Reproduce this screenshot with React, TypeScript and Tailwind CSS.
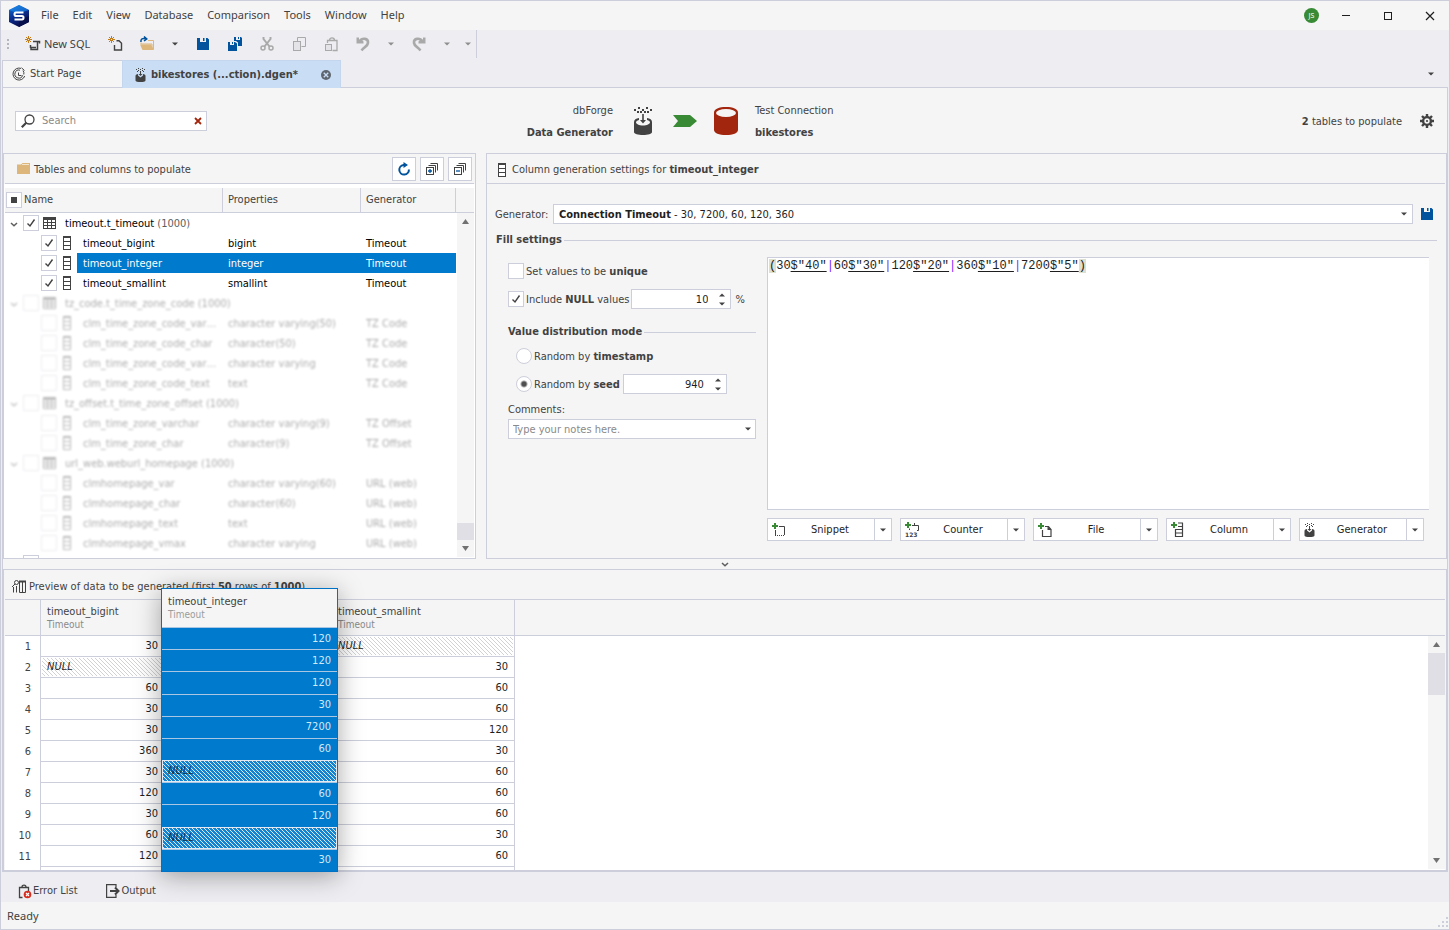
import { useId, useState, type ReactNode } from "react";

type IconProps = { className?: string };

const DARK = "#424242";
const BLUE = "#00539c";
const AMBER = "#c27d1a";
const GREEN = "#388a34";
const GRAY = "#a9a9a9";

/* ---------- icons ---------- */

const Logo = () => (
  <svg viewBox="0 0 20 22" className="h-[22px] w-5" aria-hidden="true">
    <defs>
      <linearGradient id="logo-base" x1="0" y1="0" x2="0.5" y2="1">
        <stop offset="0" stopColor="#1477d8" />
        <stop offset="0.5" stopColor="#0b3399" />
        <stop offset="1" stopColor="#0a0c45" />
      </linearGradient>
    </defs>
    <path d="M10 0 L20 5 V17 L10 22 L0 17 V5Z" fill="url(#logo-base)" />
    <path d="M10 0 L20 5 L14 7 H5 L0 5Z" fill="#1c8ff0" opacity="0.6" />
    <path d="M14 14 L20 11 V17 L10 22 V17Z" fill="#07104a" />
    <path d="M14.500 7.500 H7 Q5.500 7.500 5.500 9.200 Q5.500 11 7 11 H13 Q14.500 11 14.500 12.800 Q14.500 14.500 13 14.500 H5.500" fill="none" stroke="#fff" strokeWidth="2" />
  </svg>
);

const Star = () => (
  <g stroke={AMBER} strokeWidth="1">
    <path d="M3.500 0V7M0 3.500H7M1 1L6 6M6 1L1 6" fill="none" />
    <rect x="2.500" y="2.500" width="2" height="2" fill="#ededf2" />
  </g>
);

const NewSqlIcon = () => (
  <svg viewBox="0 0 16 16" className="size-4" aria-hidden="true">
    <Star />
    <path d="M8 5.500H14.500V7.500M12.500 5.500V13.500H6V11.500H11M5.500 9V12" fill="none" stroke={DARK} strokeWidth="1.500" />
  </svg>
);

const NewDocIcon = () => (
  <svg viewBox="0 0 16 16" className="size-4" aria-hidden="true">
    <g transform="translate(1 0)">
      <Star />
    </g>
    <path d="M9.500 4.800H12L14.500 7.300V14H7.500V9" fill="none" stroke={DARK} strokeWidth="1.400" />
  </svg>
);

const OpenIcon = () => (
  <svg viewBox="0 0 16 16" className="size-4" aria-hidden="true">
    <path d="M9 4.500H14.500V13H13V8H2V6.500" fill="none" stroke="#dcb67a" strokeWidth="1" />
    <path d="M1 8.500H12L15 14H3.500Z" fill="#dcb67a" />
    <path d="M2 6C1.500 3 3.500 2 7 2.800M5 0.500L7.800 2.900L5 5" fill="none" stroke={BLUE} strokeWidth="1.500" />
  </svg>
);

const SaveIcon = ({ className = "size-3" }: IconProps) => (
  <svg viewBox="0 0 12 12" className={className} aria-hidden="true">
    <path d="M0 0H3V4H9V0H10.500L12 1.500V12H0Z" fill={BLUE} />
    <path d="M6 0H7.500V3H6Z" fill={BLUE} />
  </svg>
);

const SaveAllIcon = () => (
  <svg viewBox="0 0 16 16" className="size-4" aria-hidden="true">
    <path d="M1 6H3V9H7V6H8L10 7.500V15H1Z M5 6H6V8H5Z" fill={BLUE} />
    <path d="M7 1H9V4H13V1H14L15 2V10H11V6.500L9 5H7Z M11 1H12V3H11Z" fill={BLUE} />
  </svg>
);

const CutIcon = () => (
  <svg viewBox="0 0 16 16" className="size-4" aria-hidden="true">
    <path d="M4.500 1V3L10.500 10.500M11.500 1V3L5.500 10.500" fill="none" stroke={GRAY} strokeWidth="2" />
    <circle cx="4" cy="12" r="2" fill="none" stroke={GRAY} strokeWidth="1.500" />
    <circle cx="12" cy="12" r="2" fill="none" stroke={GRAY} strokeWidth="1.500" />
  </svg>
);

const CopyIcon = () => (
  <svg viewBox="0 0 16 16" className="size-4" aria-hidden="true">
    <path d="M6.500 5V1.500H14.500V10.500H10.500" fill="none" stroke={GRAY} />
    <rect x="2.500" y="5.500" width="7" height="9" fill="#e4e4e8" stroke={GRAY} />
  </svg>
);

const PasteIcon = () => (
  <svg viewBox="0 0 16 16" className="size-4" aria-hidden="true">
    <path d="M4.500 7V4.500H14V14.500H9.500M6.500 4.500C6.500 1 11.500 1 11.500 4.500" fill="none" stroke={GRAY} strokeWidth="1.300" />
    <rect x="2.500" y="8.500" width="6" height="6" fill="#e4e4e8" stroke={GRAY} />
  </svg>
);

const UndoIcon = ({ className = "" }: IconProps) => (
  <svg viewBox="0 0 16 16" className={"size-4 " + className} aria-hidden="true">
    <path d="M1.500 1.500H4V4.500L6 3L8.500 5.500V7.500H1.500Z" fill={GRAY} />
    <path d="M4.500 5.500C7 1.500 13.500 2 13 7C12.700 10 9.500 11 6.500 14.500" fill="none" stroke={GRAY} strokeWidth="2.600" />
  </svg>
);

const Caret = ({ className = "text-[#424242]" }: IconProps) => (
  <svg viewBox="0 0 6 4" className={"h-1 w-1.5 " + className} aria-hidden="true">
    <path d="M0 0.500H6L3 3.500Z" fill="currentColor" />
  </svg>
);

const CaretUp = ({ className = "text-[#424242]" }: IconProps) => <Caret className={"rotate-180 " + className} />;

const StartIcon = () => (
  <svg viewBox="0 0 14 14" className="size-3.5" aria-hidden="true">
    <g fill="none" stroke={DARK}>
      <path d="M9 1.400A6 6 0 1 0 12.700 9" />
      <path d="M8 3.200A4 4 0 1 0 10.700 8.300" />
      <path d="M9.500 0.800L12.500 3.500M6.500 5.500V8.500H9.500" />
      <path d="M11 3.500A5 5 0 0 1 11.800 7.500" />
    </g>
  </svg>
);

const GeneratorIcon = () => (
  <svg viewBox="0 0 18 28" className="h-7 w-[18px]" aria-hidden="true">
    <g fill={DARK}>
      <path d="M0 2h2v2h-2zM4 0h2v2h-2zM8 2h2v2h-2zM12 0h2v2h-2zM16 2h2v2h-2zM3 4h2v2h-2zM13 4h2v2h-2zM6 4h2v2h-2zM10 4h2v2h-2z" />
      <path d="M0 15C0 12.500 2 11.500 5 11L5 13C3 13.500 2 14.500 2 15.500C2 17 5 18.500 9 18.500S16 17 16 15.500C16 14.500 15 13.500 13 13V11C16 11.500 18 12.500 18 15V25C18 27 14 28 9 28S0 27 0 25Z" />
      <path d="M8.200 7h1.600v6h2.200L9 16.500 6 13h2.200z" />
    </g>
  </svg>
);

const GeneratorSmallIcon = () => (
  <svg viewBox="0 0 11 14" className="h-3.5 w-[11px]" aria-hidden="true">
    <g fill={DARK}>
      <path d="M1 1h1v1h-1zM3 0h1v1h-1zM5 1h1v1h-1zM7 0h1v1h-1zM9 1h1v1h-1zM3 2h1v1h-1zM7 2h1v1h-1zM2 3h1v1h-1zM8 3h1v1h-1z" />
      <path d="M5 3h1v3h1.500L5.500 8L3.500 6H5Z" />
      <path d="M0.500 8C0.500 6.500 2 6.200 3 6L3 7.500L5.500 9.500L8 7.500V6C9 6.200 10.500 6.500 10.500 8V12.500C10.500 13.500 8 14 5.500 14S0.500 13.500 0.500 12.500Z" />
    </g>
  </svg>
);

const ArrowShape = () => (
  <svg viewBox="0 0 24 12" className="h-3 w-6" aria-hidden="true">
    <path d="M0 0H17L24 6L17 12H0L5 6Z" fill={GREEN} />
  </svg>
);

const DatabaseIcon = () => (
  <svg viewBox="0 0 24 28" className="h-7 w-6" aria-hidden="true">
    <path d="M0 5.500C0 2 5 0 12 0S24 2 24 5.500V23C24 26 19 28 12 28S0 26 0 23Z" fill="#a1260d" />
    <ellipse cx="12" cy="6" rx="10" ry="4" fill="#f5f5f5" />
  </svg>
);

const GearIcon = () => (
  <svg viewBox="0 0 14 14" className="size-3.5" aria-hidden="true">
    <circle cx="7" cy="7" r="3.900" fill="none" stroke={DARK} strokeWidth="2.400" />
    <circle cx="7" cy="7" r="1.100" fill={DARK} />
    <path d="M7 0V3M7 11V14M0 7H3M11 7H14M2 2L4 4M10 10L12 12M12 2L10 4M4 10L2 12" stroke={DARK} strokeWidth="2.400" />
  </svg>
);

const SearchIcon = () => (
  <svg viewBox="0 0 14 14" className="size-3.5" aria-hidden="true">
    <circle cx="8.500" cy="5.500" r="4.500" fill="none" stroke={DARK} strokeWidth="1.300" />
    <path d="M5.500 8.500L0.800 13.200" stroke={DARK} strokeWidth="2.200" />
  </svg>
);

const CrossIcon = ({ className = "" }: IconProps) => (
  <svg viewBox="0 0 8 8" className={className} aria-hidden="true">
    <path d="M1 1L7 7M7 1L1 7" stroke="currentColor" strokeWidth="1.800" />
  </svg>
);

const FolderIcon = () => (
  <svg viewBox="0 0 13 11" className="h-[11px] w-[13px]" aria-hidden="true">
    <path d="M0 1.500H4L5.500 0H13V11H0Z" fill="#dcb67a" />
    <path d="M5 1.500H12" stroke="#f5e6cb" />
  </svg>
);

const RefreshIcon = () => (
  <svg viewBox="0 0 14 14" className="size-3.5" aria-hidden="true">
    <path d="M7.500 3H6.500A4.800 4.800 0 1 0 11.900 7.500" fill="none" stroke={BLUE} strokeWidth="2" />
    <path d="M6.500 0L11 3L6.500 6Z" fill={BLUE} />
  </svg>
);

const StackIcon = ({ plus = false }: { plus?: boolean }) => (
  <svg viewBox="0 0 12 12" className="size-3" aria-hidden="true">
    <g fill="none" stroke={DARK}>
      <path d="M4.500 0.500H11.500V7.500M2.500 2.500H9.500V9.500" />
      <rect x="0.500" y="4.500" width="7" height="7" fill="#fff" />
    </g>
    <path d={plus ? "M2 8H6M4 6V10" : "M2 8H6"} stroke={BLUE} strokeWidth="1.300" />
  </svg>
);

const TableIcon = () => (
  <svg viewBox="0 0 13 12" className="h-3 w-[13px]" shapeRendering="crispEdges" aria-hidden="true">
    <path d="M0 0H13V12H0Z" fill={DARK} />
    <path d="M1 3h3v2h-3zM5 3h3v2h-3zM9 3h3v2h-3zM1 6h3v2h-3zM5 6h3v2h-3zM9 6h3v2h-3zM1 9h3v2h-3zM5 9h3v2h-3zM9 9h3v2h-3z" fill="#fff" />
  </svg>
);

const ColumnIcon = () => (
  <svg viewBox="0 0 8 14" className="h-3.5 w-2" shapeRendering="crispEdges" aria-hidden="true">
    <path d="M0 0H8V14H0Z" fill={DARK} />
    <path d="M1 2h6v3h-6zM1 6h6v3h-6zM1 10h6v3h-6z" fill="#fff" />
  </svg>
);

const ChevronIcon = () => (
  <svg viewBox="0 0 8 5" className="h-[5px] w-2" aria-hidden="true">
    <path d="M1 1L4 3.800L7 1" fill="none" stroke="#5e5e5e" strokeWidth="1.500" />
  </svg>
);

const PreviewIcon = () => (
  <svg viewBox="0 0 14 13" className="h-[13px] w-3.5" aria-hidden="true">
    <g fill="none" stroke={DARK}>
      <circle cx="4.500" cy="2.500" r="2" />
      <path d="M3 4L0 7M1.500 7V12.500M4.500 6V12.500M7.500 2V12.500H13.500V2M10.500 2V12.500" />
      <path d="M7 1.500H14" strokeWidth="2" />
    </g>
  </svg>
);

const Plus = () => <path d="M0 3H6M3 0V6" stroke={GREEN} strokeWidth="2" />;

const SnippetIcon = () => (
  <svg viewBox="0 0 14 14" className="size-3.5" aria-hidden="true">
    <Plus />
    <path d="M7 3.500H12.500V12M3.500 7V12" fill="none" stroke={DARK} />
    <path d="M3 12.500H13" stroke={DARK} strokeDasharray="1 1" />
  </svg>
);

const CounterIcon = () => (
  <svg viewBox="0 0 15 16" className="h-4 w-[15px]" aria-hidden="true">
    <Plus />
    <path d="M7 3.500H13.500V8.500H12M9.500 1V3.500M4.500 6.500V8" fill="none" stroke={DARK} />
    <text x="0" y="15" fontSize="6" fontWeight="700" fill={DARK} className="font-['DejaVu_Sans',sans-serif]">123</text>
  </svg>
);

const FileIcon = () => (
  <svg viewBox="0 0 14 14" className="size-3.5" aria-hidden="true">
    <Plus />
    <path d="M7 3.500H10.500L13 6.500V13.500H4.500V7" fill="none" stroke={DARK} strokeWidth="1.200" />
    <path d="M9.500 3L13.500 7H9.500Z" fill={DARK} />
  </svg>
);

const AddColumnIcon = () => (
  <svg viewBox="0 0 13 15" className="h-[15px] w-[13px]" aria-hidden="true">
    <Plus />
    <path d="M7 1H12M4.500 7V14.500H11.500V1M7 4.500H12M4 7.500H12M4.500 11H12" fill="none" stroke={DARK} strokeWidth="1.200" />
  </svg>
);

const ErrorListIcon = () => (
  <svg viewBox="0 0 14 15" className="h-[15px] w-3.5" aria-hidden="true">
    <path d="M4.500 13.500H1.500V3.500H10.500V7M4 3C4 0.500 8 0.500 8 3" fill="none" stroke={DARK} strokeWidth="1.300" />
    <circle cx="9.500" cy="10.500" r="3.800" fill="#d92d20" />
    <path d="M8 9L11 12M11 9L8 12" stroke="#fff" strokeWidth="1.200" />
  </svg>
);

const OutputIcon = () => (
  <svg viewBox="0 0 14 14" className="size-3.5" aria-hidden="true">
    <path d="M10 3.500V0.600H0.600V13.400H10V10.500" fill="none" stroke={DARK} strokeWidth="1.200" />
    <path d="M4 7H12M9 3.500L12.500 7L9 10.500" fill="none" stroke={DARK} strokeWidth="2" />
  </svg>
);

/* ---------- form controls ---------- */

function Check({ label, checked = false, mixed = false }: { label: string; checked?: boolean; mixed?: boolean }) {
  const [on, setOn] = useState(checked);
  return (
    <span className="relative block size-4 shrink-0">
      <input
        type="checkbox"
        aria-label={label}
        checked={on}
        onChange={() => setOn(!on)}
        className="block size-4 appearance-none border border-[#cccedb] bg-white"
      />
      {mixed && <span className="pointer-events-none absolute inset-[5px] bg-[#424242]" />}
      {on && !mixed && (
        <svg viewBox="0 0 16 16" className="pointer-events-none absolute inset-0" aria-hidden="true">
          <path d="M4.500 8.500L7 11L11.500 4.500" fill="none" stroke={DARK} strokeWidth="1.400" />
        </svg>
      )}
    </span>
  );
}

function CheckField({ label, checked, children }: { label: string; checked?: boolean; children: ReactNode }) {
  return (
    <label className="flex items-center gap-0.5">
      <Check label={label} checked={checked} />
      <span className="pt-px">{children}</span>
    </label>
  );
}

function RadioField({ checked = false, children }: { checked?: boolean; children: ReactNode }) {
  return (
    <label className="flex items-center gap-0.5">
      <input
        type="radio"
        name="distribution"
        defaultChecked={checked}
        className="size-4 appearance-none rounded-full border border-[#cccedb] bg-white checked:bg-[radial-gradient(circle,#4f4f4f_2px,#fff_4px)]"
      />
      <span className="pt-px">{children}</span>
    </label>
  );
}

function Spin({ label, value, className }: { label: string; value: number; className: string }) {
  const [n, setN] = useState(value);
  return (
    <span className={"flex h-5 border border-[#cccedb] bg-white " + className}>
      <input
        type="number"
        aria-label={label}
        value={n}
        onChange={(e) => setN(Number(e.target.value))}
        className="w-0 min-w-0 flex-1 bg-transparent pt-px text-right text-[#1e1e1e] outline-none [appearance:textfield] [&::-webkit-inner-spin-button]:appearance-none"
      />
      <span className="ml-1.5 flex w-4 flex-col">
        <button type="button" aria-label={"Increase " + label} onClick={() => setN(n + 1)} className="flex flex-1 items-center justify-center">
          <CaretUp />
        </button>
        <button type="button" aria-label={"Decrease " + label} onClick={() => setN(n - 1)} className="flex flex-1 items-center justify-center">
          <Caret />
        </button>
      </span>
    </span>
  );
}

function Heading({ children }: { children: ReactNode }) {
  return (
    <h3 className="flex h-4 items-center gap-0.5 font-bold">
      <span>{children}</span>
      <span className="h-px flex-1 bg-[#cccedb]" />
    </h3>
  );
}

function ScrollBar({ className, children }: { className: string; children: ReactNode }) {
  return (
    <div className={"absolute right-px bottom-px flex w-[17px] flex-col items-center bg-[#f5f5f5] " + className}>
      <span className="flex h-[17px] shrink-0 items-center text-[#717171]">
        <svg viewBox="0 0 7 5" className="h-[5px] w-[7px]" aria-hidden="true">
          <path d="M0 5H7L3.500 0Z" fill="currentColor" />
        </svg>
      </span>
      {children}
      <span className="flex h-[17px] shrink-0 items-center text-[#717171]">
        <svg viewBox="0 0 7 5" className="h-[5px] w-[7px]" aria-hidden="true">
          <path d="M0 0H7L3.500 5Z" fill="currentColor" />
        </svg>
      </span>
    </div>
  );
}

function ToolButton({ label, className = "w-8", children }: { label: string; className?: string; children: ReactNode }) {
  return (
    <button type="button" aria-label={label} className={"flex h-7 items-center justify-center " + className}>
      {children}
    </button>
  );
}

/* ---------- data ---------- */

type TreeRow = { name: string; count?: string; type?: string; gen?: string; state?: "on" | "selected" };

const treeRows: TreeRow[] = [
  { name: "timeout.t_timeout", count: "(1000)", state: "on" },
  { name: "timeout_bigint", type: "bigint", gen: "Timeout", state: "on" },
  { name: "timeout_integer", type: "integer", gen: "Timeout", state: "selected" },
  { name: "timeout_smallint", type: "smallint", gen: "Timeout", state: "on" },
  { name: "tz_code.t_time_zone_code", count: "(1000)" },
  { name: "clm_time_zone_code_var…", type: "character varying(50)", gen: "TZ Code" },
  { name: "clm_time_zone_code_char", type: "character(50)", gen: "TZ Code" },
  { name: "clm_time_zone_code_var…", type: "character varying", gen: "TZ Code" },
  { name: "clm_time_zone_code_text", type: "text", gen: "TZ Code" },
  { name: "tz_offset.t_time_zone_offset", count: "(1000)" },
  { name: "clm_time_zone_varchar", type: "character varying(9)", gen: "TZ Offset" },
  { name: "clm_time_zone_char", type: "character(9)", gen: "TZ Offset" },
  { name: "url_web.weburl_homepage", count: "(1000)" },
  { name: "clmhomepage_var", type: "character varying(60)", gen: "URL (web)" },
  { name: "clmhomepage_char", type: "character(60)", gen: "URL (web)" },
  { name: "clmhomepage_text", type: "text", gen: "URL (web)" },
  { name: "clmhomepage_vmax", type: "character varying", gen: "URL (web)" },
];

const preview: { bigint: string; integer: string; smallint: string }[] = [
  { bigint: "30", integer: "120", smallint: "NULL" },
  { bigint: "NULL", integer: "120", smallint: "30" },
  { bigint: "60", integer: "120", smallint: "60" },
  { bigint: "30", integer: "30", smallint: "60" },
  { bigint: "30", integer: "7200", smallint: "120" },
  { bigint: "360", integer: "60", smallint: "30" },
  { bigint: "30", integer: "NULL", smallint: "60" },
  { bigint: "120", integer: "60", smallint: "60" },
  { bigint: "30", integer: "120", smallint: "60" },
  { bigint: "60", integer: "NULL", smallint: "30" },
  { bigint: "120", integer: "30", smallint: "60" },
];

const pattern: [string, string][] = [
  ["30", '$"40"'],
  ["60", '$"30"'],
  ["120", '$"20"'],
  ["360", '$"10"'],
  ["7200", '$"5"'],
];

const menus = ["File", "Edit", "View", "Database", "Comparison", "Tools", "Window", "Help"];

const inserts = [
  { label: "Snippet", icon: <SnippetIcon /> },
  { label: "Counter", icon: <CounterIcon /> },
  { label: "File", icon: <FileIcon /> },
  { label: "Column", icon: <AddColumnIcon /> },
  { label: "Generator", icon: <GeneratorSmallIcon /> },
];

/* ---------- sections ---------- */

function TitleBar() {
  return (
    <header className="flex h-[29px] shrink-0 items-center bg-[#f5f5f5] pl-2 font-['Noto_Sans',sans-serif]">
      <Logo />
      <nav className="ml-[5px] flex pb-px">
        {menus.map((m) => (
          <button key={m} type="button" className="px-[7px] leading-4">
            {m}
          </button>
        ))}
      </nav>
      <div className="ml-auto flex items-center pr-3.5">
        <span className="flex size-[15px] items-center justify-center rounded-full bg-[#388a34] text-[7px] text-white">JS</span>
        <button type="button" aria-label="Minimize" className="ml-[23px] flex h-5 w-2.5 items-center">
          <span className="h-px w-2 bg-[#1e1e1e]" />
        </button>
        <button type="button" aria-label="Maximize" className="ml-8 flex h-5 w-2 items-center">
          <span className="size-2 border border-[#1e1e1e]" />
        </button>
        <button type="button" aria-label="Close" className="ml-[33px] text-[#1e1e1e]">
          <svg viewBox="0 0 10 10" className="size-2.5" aria-hidden="true">
            <path d="M1 1L9 9M9 1L1 9" stroke="currentColor" strokeWidth="1.200" />
          </svg>
        </button>
      </div>
    </header>
  );
}

function ToolBar() {
  return (
    <div className="flex h-[30px] shrink-0 items-start">
      <div className="flex h-7 items-center border-r border-[#cccedb]">
        <svg viewBox="0 0 2 10" className="ml-1.5 h-2.5 w-0.5" aria-hidden="true">
          <path d="M0 0h2v2h-2zM0 4h2v2h-2zM0 8h2v2h-2z" fill="#b5b5bf" />
        </svg>
        <button type="button" className="ml-4 flex h-7 w-[74px] items-center gap-[3px] font-['Noto_Sans',sans-serif] leading-4 whitespace-nowrap">
          <NewSqlIcon />
          New SQL
        </button>
        <ToolButton label="New document"><NewDocIcon /></ToolButton>
        <ToolButton label="Open"><OpenIcon /></ToolButton>
        <ToolButton label="Open recent" className="w-6"><Caret /></ToolButton>
        <ToolButton label="Save"><SaveIcon /></ToolButton>
        <ToolButton label="Save all"><SaveAllIcon /></ToolButton>
        <ToolButton label="Cut"><CutIcon /></ToolButton>
        <ToolButton label="Copy"><CopyIcon /></ToolButton>
        <ToolButton label="Paste"><PasteIcon /></ToolButton>
        <ToolButton label="Undo"><UndoIcon /></ToolButton>
        <ToolButton label="Undo history" className="w-6"><Caret className="text-[#8e8e8e]" /></ToolButton>
        <ToolButton label="Redo"><UndoIcon className="-scale-x-100" /></ToolButton>
        <ToolButton label="Redo history" className="w-6"><Caret className="text-[#8e8e8e]" /></ToolButton>
        <ToolButton label="Toolbar options" className="w-[17px]"><Caret className="text-[#8e8e8e]" /></ToolButton>
      </div>
    </div>
  );
}

function DocumentTabs() {
  return (
    <div role="tablist" className="mx-px flex h-7 shrink-0 items-stretch">
      <button type="button" role="tab" aria-selected="false" className="flex w-[120px] items-center gap-1 border border-r-0 border-[#cccedb] bg-[#f5f5f5] pl-[9px]">
        <StartIcon />
        Start Page
      </button>
      <div className="flex w-[219px] items-center border border-b-0 border-[#c3d6ee] bg-[#c9def5] pl-3">
        <button type="button" role="tab" aria-selected="true" className="flex items-center gap-[5px] font-bold">
          <GeneratorSmallIcon />
          bikestores (...ction).dgen*
        </button>
        <button type="button" aria-label="Close document" className="mr-[9px] ml-auto flex size-2.5 items-center justify-center rounded-full bg-[#5f6670] text-[#c9def5]">
          <CrossIcon className="size-1.5" />
        </button>
      </div>
      <div className="flex flex-1 items-center justify-end border-b border-[#cccedb] pr-3.5">
        <button type="button" aria-label="Open documents"><Caret /></button>
      </div>
    </div>
  );
}

function Banner() {
  return (
    <div className="flex h-[65px] shrink-0 items-center pl-3">
      <label className="flex h-5 w-48 items-center border border-[#cccedb] bg-white pr-1 pl-[5px]">
        <SearchIcon />
        <input type="text" aria-label="Search" placeholder="Search" className="ml-[7px] w-0 flex-1 bg-transparent outline-none placeholder:text-[#8a8a8a]" />
        <button type="button" aria-label="Clear search" className="text-[#a1260d]"><CrossIcon className="size-2" /></button>
      </label>
      <p className="w-[406px] pt-0.5 text-right leading-[22px]">
        dbForge
        <br />
        <b>Data Generator</b>
      </p>
      <span className="ml-[21px]"><GeneratorIcon /></span>
      <span className="ml-[21px]"><ArrowShape /></span>
      <span className="ml-[17px]"><DatabaseIcon /></span>
      <p className="ml-[17px] pt-0.5 leading-[22px]">
        Test Connection
        <br />
        <b>bikestores</b>
      </p>
      <p className="ml-auto pt-0.5"><b>2</b> tables to populate</p>
      <button type="button" aria-label="Generation options" className="mr-[13px] ml-[18px]"><GearIcon /></button>
    </div>
  );
}

function TreeRowView({ row }: { row: TreeRow }) {
  const live = row.state !== undefined;
  const selected = row.state === "selected";
  const soft = live ? "" : "opacity-35 blur-[1px]";
  const tone = selected ? "bg-[#007acc] text-white" : "text-black";
  if (row.count) {
    return (
      <tr>
        <td colSpan={4} className="p-0">
          <div className={"flex h-5 items-center " + soft}>
            <span className="flex w-[18px] justify-center pt-0.5"><ChevronIcon /></span>
            <Check label={row.name} checked={live} />
            <span className="ml-1"><TableIcon /></span>
            <span className="ml-[9px] h-5 leading-[22px] text-black">
              {row.name} <span className={live ? "text-[#5e5e5e]" : ""}>{row.count}</span>
            </span>
          </div>
        </td>
      </tr>
    );
  }
  return (
    <tr>
      <td className="p-0">
        <div className={"flex h-5 items-center pl-9 " + soft}>
          <Check label={row.name} checked={live} />
          <span className="mx-1.5"><ColumnIcon /></span>
          <span className={"h-5 min-w-0 flex-1 truncate pl-1.5 leading-[22px] " + tone}>{row.name}</span>
        </div>
      </td>
      <td className="p-0"><div className={"h-5 truncate pl-[5px] leading-[22px] " + soft + " " + tone}>{row.type}</div></td>
      <td className="p-0"><div className={"h-5 truncate pl-[5px] leading-[22px] " + soft + " " + tone}>{row.gen}</div></td>
      <td className="p-0" />
    </tr>
  );
}

function TreePanel() {
  const head = "h-[25px] border-r border-b border-[#cccedb] bg-[#f5f5f5] p-0 text-left font-normal";
  return (
    <section className="flex w-[473px] shrink-0 flex-col border border-[#cccedb]">
      <div className="mx-px flex h-[30px] shrink-0 items-center border-b border-[#cccedb] pr-0.5 pl-3">
        <FolderIcon />
        <h2 className="ml-1 pt-0.5">Tables and columns to populate</h2>
        <div className="ml-auto flex gap-1">
          {[
            { label: "Refresh", icon: <RefreshIcon /> },
            { label: "Expand all", icon: <StackIcon plus /> },
            { label: "Collapse all", icon: <StackIcon /> },
          ].map((b) => (
            <button key={b.label} type="button" aria-label={b.label} className="flex size-6 items-center justify-center border border-[#cccedb] bg-white">
              {b.icon}
            </button>
          ))}
        </div>
      </div>
      <div className="relative max-h-[374px] overflow-hidden bg-white px-px pt-1">
        <table className="w-full table-fixed border-separate border-spacing-0">
          <colgroup>
            <col />
            <col className="w-[138px]" />
            <col className="w-[95px]" />
            <col className="w-[18px]" />
          </colgroup>
          <thead>
            <tr>
              <th className={head}>
                <div className="flex items-center gap-0.5 pl-px"><Check label="Select all" mixed /> Name</div>
              </th>
              <th className={head + " pl-[5px]"}>Properties</th>
              <th className={head + " pl-[5px]"}>Generator</th>
              <th className="border-b border-[#cccedb] bg-[#f5f5f5] p-0" />
            </tr>
          </thead>
          <tbody>
            {treeRows.map((row, i) => <TreeRowView key={i} row={row} />)}
            <tr>
              <td colSpan={4} className="p-0"><div className="h-5 pt-0.5 pl-[18px]"><Check label="Next table" /></div></td>
            </tr>
          </tbody>
        </table>
        <ScrollBar className="top-[29px]">
          <span className="mt-auto h-[17px] w-full bg-[#dfdfe5]" />
        </ScrollBar>
      </div>
    </section>
  );
}

function PatternEditor() {
  const text = "(" + pattern.map((p) => p.join("")).join("|") + ")";
  const [value, setValue] = useState(text);
  return (
    <div className="relative flex-1 border-y border-l border-[#cccedb] bg-white font-['Liberation_Mono',monospace] text-xs leading-4">
      <pre aria-hidden="true" className="px-px font-['Liberation_Mono',monospace] text-[#1e1e1e]">
        {value === text ? (
          <>
            <span className="bg-[#dde0cf]">(</span>
            {pattern.map(([n, w], i) => (
              <span key={n}>
                {i > 0 && <span className="text-[#7a1fff]">|</span>}
                {n}
                <span className="underline underline-offset-2">{w}</span>
              </span>
            ))}
            <span className="bg-[#dde0cf]">)</span>
          </>
        ) : value}
      </pre>
      <textarea
        aria-label="Generator pattern"
        spellCheck={false}
        value={value}
        onChange={(e) => setValue(e.target.value)}
        className="absolute inset-0 block size-full resize-none bg-transparent px-px text-transparent caret-black outline-none"
      />
    </div>
  );
}

function SettingsPanel() {
  const id = useId();
  return (
    <section className="flex min-w-0 flex-1 flex-col border border-[#cccedb]">
      <h2 className="mr-px flex h-[30px] shrink-0 items-center border-b border-[#cccedb] pt-[3px] pl-[11px]">
        <ColumnIcon />
        <span className="ml-1.5">Column generation settings for <b>timeout_integer</b></span>
      </h2>
      <div className="mt-5 flex h-5 items-center pr-[5px] pl-2">
        <label htmlFor={id + "gen"} className="w-[58px] shrink-0 pt-px">Generator:</label>
        <span className="relative flex h-5 flex-1 items-center border border-[#cccedb] bg-white px-[5px] text-[#1e1e1e]">
          <span className="flex-1 pt-px"><b>Connection Timeout</b> - 30, 7200, 60, 120, 360</span>
          <Caret />
          <select id={id + "gen"} className="absolute inset-0 size-full opacity-0">
            <option>Connection Timeout</option>
          </select>
        </span>
        <button type="button" aria-label="Save generator" className="flex w-7 justify-center"><SaveIcon /></button>
      </div>
      <div className="mt-2 flex flex-1 flex-col pl-[9px]">
        <div className="pr-[9px]"><Heading>Fill settings</Heading></div>
        <div className="mt-[9px] flex flex-1">
          <div className="w-[260px] shrink-0 pt-1 pl-3">
            <div className="flex h-5 items-center"><CheckField label="Set values to be unique">Set values to be <b>unique</b></CheckField></div>
            <div className="mt-2 flex h-5 items-center">
              <CheckField label="Include NULL values" checked>Include <b>NULL</b> values</CheckField>
              <Spin label="NULL percentage" value={10} className="ml-0.5 w-[100px]" />
              <span className="ml-1 pt-px">%</span>
            </div>
            <div className="mt-[15px]"><Heading>Value distribution mode</Heading></div>
            <div className="mt-1.5 flex h-5 items-center pl-2"><RadioField>Random by <b>timestamp</b></RadioField></div>
            <div className="mt-2 flex h-5 items-center pl-2">
              <RadioField checked>Random by <b>seed</b></RadioField>
              <Spin label="seed" value={940} className="ml-[3px] w-[104px]" />
            </div>
            <label htmlFor={id + "notes"} className="mt-2 block leading-4">Comments:</label>
            <div className="mt-px flex h-5 items-center border border-[#cccedb] bg-white px-1">
              <input id={id + "notes"} type="text" placeholder="Type your notes here." className="w-0 flex-1 bg-transparent pt-px outline-none placeholder:text-[#8a8a8a]" />
              <button type="button" aria-label="Recent notes"><Caret /></button>
            </div>
          </div>
          <div className="ml-[11px] flex min-w-0 flex-1 flex-col pr-[17px] pb-[17px]">
            <PatternEditor />
            <div className="mt-2 flex gap-2">
              {inserts.map((b) => (
                <div key={b.label} className="flex h-[23px] w-[125px] border border-[#cccedb] bg-white text-[#1e1e1e]">
                  <button type="button" className="flex flex-1 items-center pl-1">
                    <span className="w-3.5">{b.icon}</span>
                    <span className="flex-1 pt-px text-center">{b.label}</span>
                  </button>
                  <button type="button" aria-label={b.label + " options"} className="flex w-[17px] items-center justify-center border-l border-[#cccedb]"><Caret /></button>
                </div>
              ))}
            </div>
          </div>
        </div>
      </div>
    </section>
  );
}

function PreviewCell({ value }: { value: string }) {
  const empty = value === "NULL";
  return (
    <td className="h-[21px] border-r border-b border-[#cccedb] p-px">
      <div
        className={
          empty
            ? "h-[18px] bg-[linear-gradient(45deg,#d2d2d2_0_12.5%,transparent_12.5%_50%,#d2d2d2_50%_62.5%,transparent_62.5%)] bg-size-[4px_4px] pl-[5px] leading-[18px] text-[#1e1e1e] italic"
            : "h-[18px] pr-[5px] text-right leading-[18px] text-[#1e1e1e]"
        }
      >
        {value}
      </div>
    </td>
  );
}

function DraggedColumn() {
  return (
    <div className="absolute top-[18px] -bottom-0.5 left-[157px] z-10 flex w-[177px] flex-col border border-[#0072c6] bg-[#007acc] shadow-[0_4px_24px_rgba(0,0,0,0.35)]">
      <div className="h-[38px] shrink-0 bg-[#f5f5f5] pt-1.5 pl-1.5 leading-[14px]">
        timeout_integer
        <div className="text-[10px] leading-3 text-[#9b9b9b]">Timeout</div>
      </div>
      <div className="grid flex-1 auto-rows-fr">
        {preview.map(({ integer }, i) =>
          integer === "NULL" ? (
            <div key={i} className="flex items-center border border-[#e4e9f2] bg-[linear-gradient(45deg,#d8eaf8_0_20%,#1583d0_20%_50%,#d8eaf8_50%_70%,#1583d0_70%)] bg-size-[4px_4px] pl-[5px] text-[#0a2c48] italic">{integer}</div>
          ) : (
            <div key={i} className="flex items-center justify-end border-t border-[#a9c6e2] pr-1.5 text-[#d3e8f7]">{integer}</div>
          ),
        )}
      </div>
    </div>
  );
}

function PreviewPanel() {
  const head = "h-9 border-r border-b border-[#cccedb] bg-[#f5f5f5] p-0 pl-1.5 text-left font-normal leading-[13px]";
  return (
    <section className="relative flex min-h-0 flex-1 flex-col border border-[#cccedb]">
      <h2 className="mx-px flex h-[30px] shrink-0 items-center gap-[3px] border-b border-[#cccedb] pt-1 pl-[7px]">
        <PreviewIcon />
        <span>Preview of data to be generated (first <b>50</b> rows of <b>1000</b>)</span>
      </h2>
      <div className="mx-px min-h-0 flex-1 overflow-hidden bg-white">
        <table className="w-full table-fixed border-separate border-spacing-0">
          <colgroup>
            <col className="w-9" />
            <col className="w-[124px]" />
            <col className="w-[167px]" />
            <col className="w-[183px]" />
            <col />
          </colgroup>
          <thead>
            <tr>
              <th className={head} />
              {["timeout_bigint", "", "timeout_smallint"].map((c) => (
                <th key={c} className={head}>
                  {c}
                  {c && <div className="text-[10px] text-[#8a8a8a]">Timeout</div>}
                </th>
              ))}
              <th className="border-b border-[#cccedb] bg-[#f5f5f5] p-0" />
            </tr>
          </thead>
          <tbody>
            {[...preview, { bigint: "", smallint: "" }].map((r, i) => (
              <tr key={i}>
                <th scope="row" className="border-r border-[#cccedb] p-0 pr-[9px] text-right font-normal">{r.bigint && i + 1}</th>
                <PreviewCell value={r.bigint} />
                <PreviewCell value="" />
                <PreviewCell value={r.smallint} />
                <td className="p-0" />
              </tr>
            ))}
          </tbody>
        </table>
      </div>
      <ScrollBar className="top-[66px]">
        <span className="mb-auto h-[42px] w-full bg-[#dfdfe5]" />
      </ScrollBar>
      <DraggedColumn />
    </section>
  );
}

export default function App() {
  return (
    <div className="flex h-screen min-h-[760px] flex-col border border-[#cccedb] bg-[#eeeef2] font-['DejaVu_Sans_Condensed','DejaVu_Sans',sans-serif] text-[11px] leading-4 text-[#424242]">
      <TitleBar />
      <ToolBar />
      <DocumentTabs />
      <main className="mx-px flex min-h-0 flex-1 flex-col border-x border-b border-[#cccedb] bg-[#f5f5f5]">
        <Banner />
        <div className="flex shrink-0 gap-2.5">
          <TreePanel />
          <SettingsPanel />
        </div>
        <div className="flex h-2.5 shrink-0 items-center justify-center"><ChevronIcon /></div>
        <PreviewPanel />
      </main>
      <div className="flex h-[30px] shrink-0 items-center pt-2 pl-[17px]">
        <button type="button" className="flex items-center gap-px"><ErrorListIcon />Error List</button>
        <button type="button" className="ml-7 flex items-center gap-0.5"><OutputIcon />Output</button>
      </div>
      <footer className="flex h-[27px] shrink-0 items-center bg-[#f5f5f5] pl-1.5 font-['Noto_Sans',sans-serif]">
        Ready
        <svg viewBox="0 0 10 10" className="mr-px mb-0.5 ml-auto size-2.5 self-end" aria-hidden="true">
          <path d="M8 0h2v2h-2zM4 4h2v2h-2zM8 4h2v2h-2zM0 8h2v2h-2zM4 8h2v2h-2zM8 8h2v2h-2z" fill="#cccedb" />
        </svg>
      </footer>
    </div>
  );
}
